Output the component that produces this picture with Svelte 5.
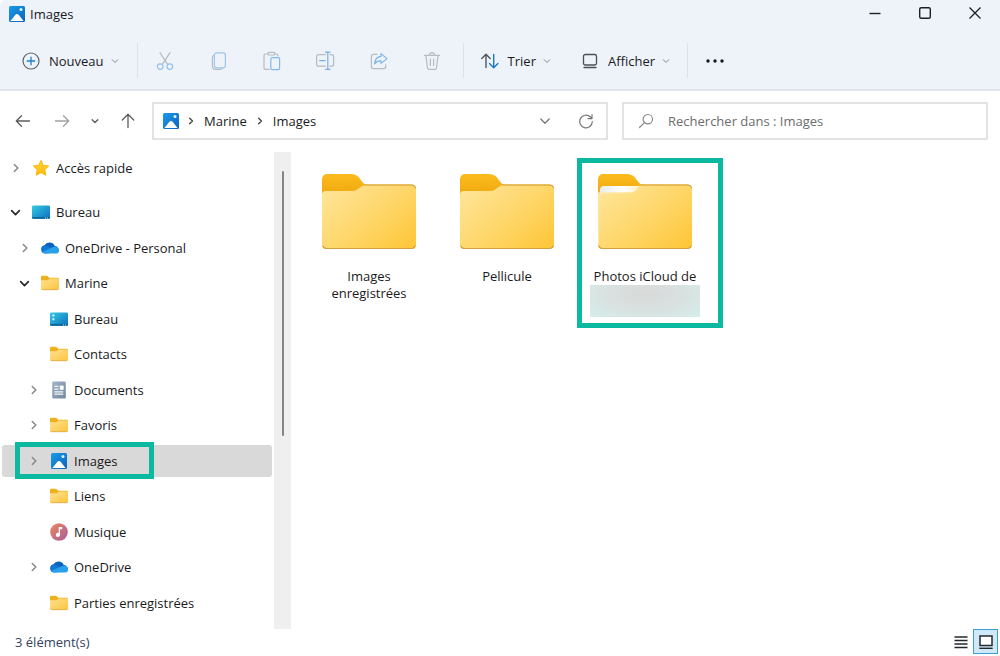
<script>
  const tree = [
    { label: 'Bureau', icon: 'desktop', level: 0, state: 'open' },
    { label: 'OneDrive - Personal', icon: 'cloud', level: 1, state: 'closed' },
    { label: 'Marine', icon: 'folder', level: 1, state: 'open' },
    { label: 'Bureau', icon: 'desktopItems', level: 2 },
    { label: 'Contacts', icon: 'folder', level: 2 },
    { label: 'Documents', icon: 'document', level: 2, state: 'closed' },
    { label: 'Favoris', icon: 'folder', level: 2, state: 'closed' },
    { label: 'Images', icon: 'image', level: 2, state: 'closed', selected: true },
    { label: 'Liens', icon: 'folder', level: 2 },
    { label: 'Musique', icon: 'music', level: 2 },
    { label: 'OneDrive', icon: 'cloud', level: 2, state: 'closed' },
    { label: 'Parties enregistrées', icon: 'folder', level: 2 }
  ];
  const folders = [
    { label: 'Images enregistrées' },
    { label: 'Pellicule' },
    { label: 'Photos iCloud de', marked: true }
  ];
  const tools = [
    { name: 'cut', label: 'Couper' },
    { name: 'copy', label: 'Copier' },
    { name: 'paste', label: 'Coller' },
    { name: 'rename', label: 'Renommer' },
    { name: 'share', label: 'Partager' },
    { name: 'trash', label: 'Supprimer' }
  ];
</script>

{#snippet chevron(dir, size, color, weight)}
  <svg width={size} height={size} viewBox="0 0 12 12" fill="none" stroke={color} stroke-width={weight} stroke-linecap="round" stroke-linejoin="round" aria-hidden="true">
    {#if dir === 'down'}<path d="M1.8 4 6 8.2 10.2 4" />{:else}<path d="M4 1.8 8.2 6 4 10.2" />{/if}
  </svg>
{/snippet}

{#snippet glyph(name)}
  <svg width="18" height="18" viewBox="0 0 18 18" aria-hidden="true">
    {#if name === 'image'}
      <rect x="1" y="1" width="16" height="16" rx="1.5" fill="url(#blue)" />
      <path d="M2.4 16 7.6 9.6q1.4-1.4 2.8 0L15.6 16z" fill="#fff" />
      <circle cx="13" cy="4.4" r="1.5" fill="#e4f4ff" />
    {:else if name === 'star'}
      <path d="M9 1.4 11.3 6.3 16.7 7 12.8 10.7 13.8 16.3 9 13.6 4.2 16.3 5.2 10.7 1.3 7 6.7 6.3z" fill="url(#gold)" stroke="#f9b90f" stroke-width="1" stroke-linejoin="round" />
    {:else if name === 'desktop' || name === 'desktopItems'}
      <rect x="0" y="2.4" width="18" height="13.4" rx="1.4" fill="url(#sea)" />
      <path d="M0 14h18v.4a1.4 1.4 0 0 1-1.4 1.4H1.4A1.4 1.4 0 0 1 0 14.4z" fill="#0b6595" />
      <path d="M13 14.5h1v1h-1zM15 14.5h1v1h-1z" fill="#c7e8f6" />
      {#if name === 'desktopItems'}
        <path d="M2.400 4.600h2v2h-2zM2.400 8.200h2v2h-2z" fill="#dffaff" />
      {/if}
    {:else if name === 'cloud'}
      <path d="M4.3 14.6A4.2 4.2 0 0 1 3.5 6.3 5.8 5.8 0 0 1 13.8 7.1a4 4 0 0 1 3.4 6.1z" fill="#0a62ba" />
      <path d="M.4 9.5A4.2 4.2 0 0 1 6.8 7.2L12.5 10 5 14H2z" fill="#0f78d4" />
      <path d="M1.2 13 8.7 9.5 12 8A4 4 0 0 1 18 11.2a3.4 3.4 0 0 1-3.3 3.4H4.3A4.2 4.2 0 0 1 1.2 13z" fill="#28a0ea" />
    {:else if name === 'folder'}
      <path d="M0 3.2A1.4 1.4 0 0 1 1.4 1.8h4.8l2 2H16.6A1.4 1.4 0 0 1 18 5.2V10H0z" fill="#eeb01c" />
      <path d="M0 6.2h6.8l1.8-1.8h8A1.4 1.4 0 0 1 18 5.8v8.6a1.4 1.4 0 0 1-1.4 1.4H1.4A1.4 1.4 0 0 1 0 14.4z" fill="url(#front)" />
      <path d="M.5 15.2q.4.5 1 .5h15q.6 0 1-.5" fill="none" stroke="#d9a338" stroke-width=".8" />
    {:else if name === 'document'}
      <rect x="2.2" y=".4" width="13.6" height="17.2" rx="1.4" fill="url(#slate)" />
      <path d="M4.5 5.4h4M4.5 8.2h4M4.5 10.8h8.8M4.5 13.2h8.8" stroke="#f4f8fc" stroke-width="1.2" />
      <rect x="9.8" y="4.6" width="3.8" height="4.2" fill="#fff" />
    {:else if name === 'music'}
      <circle cx="9" cy="9" r="8.8" fill="url(#coral)" />
      <circle cx="7.9" cy="11.9" r="2.1" fill="#fff" />
      <path d="M8.7 12V4h3.5v2.2H10V12z" fill="#fff" />
    {/if}
  </svg>
{/snippet}

{#snippet tool(name)}
  <svg width="20" height="20" viewBox="0 0 20 20" fill="none" stroke="#b7bbc0" stroke-width="1.2" stroke-linecap="round" stroke-linejoin="round" aria-hidden="true">
    {#if name === 'cut'}
      <path d="M5 1.6 12.6 13.4M15 1.6 7.4 13.4" />
      <g stroke="#94c0ea"><circle cx="5.2" cy="15.6" r="2.8" /><circle cx="14.8" cy="15.6" r="2.8" /></g>
    {:else if name === 'copy'}
      <path d="M5 4.4Q3.4 5 3.4 7v8q0 3.4 3.4 3.4H11q2 0 2.8-1.4" />
      <rect x="5.4" y="1.8" width="11" height="15" rx="2.2" stroke="#9cc6ee" />
    {:else if name === 'paste'}
      <path d="M6 3H3.8Q2 3 2 4.8v11.6Q2 18.4 4 18.4h3M13 3h1.2Q16 3 16 5" />
      <rect x="6" y="1.4" width="7" height="2.6" rx="1.3" />
      <rect x="8.8" y="6.6" width="8.8" height="12" rx="1.4" stroke="#82b9ee" />
    {:else if name === 'rename'}
      <path d="M10.4 3.6H3.6Q1.6 3.6 1.6 5.6v7.6q0 2 2 2h6.8M15 3.6h1.6q2 0 2 2v7.6q0 2-2 2H15" />
      <path d="M12.8 1.4v16.8M10.6 1.2h4.4M10.6 18.4h4.4M4.6 9.6h5.6" stroke="#78aee4" />
    {:else if name === 'share'}
      <path d="M8 3.4H4.4q-2 0-2 2v10.2q0 2 2 2h10.4q2 0 2-2v-2" />
      <path d="M12 2.6 18 7.6 12 12.4V9.8Q7.8 9.6 5.6 13 6 6 12 5.4z" stroke="#7db5e8" />
    {:else}
      <path d="M2.4 4.4h15.2M7.6 4.2q0-2.6 2.4-2.6t2.4 2.6M4 4.6l1.4 12q.2 1.8 2 1.8h5.2q1.8 0 2-1.8l1.4-12M8.4 8v6.4M11.6 8v6.4" />
    {/if}
  </svg>
{/snippet}

{#snippet bigFolder(marked)}
  <svg class="big" width="94" height="76" viewBox="0 0 94 76" aria-hidden="true">
    <path d="M0 5a5 5 0 0 1 5-5h24q5 0 8 3.5l3.5 4.8Q42 10.500 45 10.500h44a5 5 0 0 1 5 5V40H0z" fill="url(#tab)" />
    <path d="M0 20.500Q0 17 4 17h26q4 0 6.500-2.500l2-1.500q2-1.700 5-1.700H89.500a4.500 4.500 0 0 1 4.500 4.500V70.500a4.500 4.500 0 0 1-4.500 4.500h-85A4.500 4.500 0 0 1 0 70.500z" fill="url(#bigFront)" />
    {#if marked}
      <path d="M2 16q0-4 4-4h35l-2 4q-2 2-6 2.300L6 19q-4 0-4 5z" fill="url(#paper)" />
      <path d="M.6 70V22q0-3 3-3H33q4 0 7-5" fill="none" stroke="#ffe79f" stroke-width="1" />
    {/if}
    <path d="M.6 71.500Q1.500 74.500 4.500 74.500h85q3 0 4-3M43 11h46.500q3.500 0 4 3" fill="none" stroke="#d3a142" stroke-width="1.100" />
  </svg>
{/snippet}

<svg class="defs" width="0" height="0" aria-hidden="true">
  <defs>
    <linearGradient id="blue" x1="0" y1="0" x2="1" y2="1"><stop offset="0" stop-color="#1a9be8" /><stop offset="1" stop-color="#0b63bd" /></linearGradient>
    <linearGradient id="gold" x1="0" y1="0" x2="0" y2="1"><stop offset="0" stop-color="#ffd43c" /><stop offset="1" stop-color="#fdb90a" /></linearGradient>
    <linearGradient id="sea" x1="0" y1="0" x2="1" y2="1"><stop offset="0" stop-color="#35cbe3" /><stop offset="1" stop-color="#0b6fc0" /></linearGradient>
    <linearGradient id="front" x1="0" y1="0" x2="1" y2="1"><stop offset="0" stop-color="#ffe294" /><stop offset="1" stop-color="#fdc43c" /></linearGradient>
    <linearGradient id="bigFront" x1="0" y1="0.1" x2="1" y2="0.9"><stop offset="0" stop-color="#ffe598" /><stop offset="0.5" stop-color="#fed76c" /><stop offset="1" stop-color="#fec73a" /></linearGradient>
    <linearGradient id="tab" x1="0" y1="0" x2="0" y2="0.5"><stop offset="0" stop-color="#fcbb1c" /><stop offset="1" stop-color="#efa90f" /></linearGradient>
    <linearGradient id="paper" x1="0" y1="0" x2="1" y2="0"><stop offset="0" stop-color="#e9edf0" /><stop offset="0.6" stop-color="#fff" /><stop offset="1" stop-color="#fff1c4" /></linearGradient>
    <linearGradient id="slate" x1="0" y1="0" x2="1" y2="1"><stop offset="0" stop-color="#a3b5c8" /><stop offset="1" stop-color="#71869f" /></linearGradient>
    <linearGradient id="coral" x1="0" y1="0" x2="1" y2="1"><stop offset="0" stop-color="#f0895b" /><stop offset="1" stop-color="#a85a9c" /></linearGradient>
  </defs>
</svg>

<div class="window">
  <header>
    <div class="titlebar">
      <div class="title">{@render glyph('image')}<span>Images</span></div>
      <div class="controls">
        <button aria-label="Réduire"><svg width="14" height="14" viewBox="0 0 14 14"><path d="M1.500 7.500h11" stroke="#1c1f24" stroke-width="1.400" /></svg></button>
        <button aria-label="Agrandir"><svg width="14" height="14" viewBox="0 0 14 14"><rect x="1.700" y="1.700" width="10.600" height="10.600" rx="1.500" fill="none" stroke="#1c1f24" stroke-width="1.400" /></svg></button>
        <button aria-label="Fermer"><svg width="14" height="14" viewBox="0 0 14 14"><path d="M1.500 1.500l11 11M12.500 1.500l-11 11" stroke="#1c1f24" stroke-width="1.300" /></svg></button>
      </div>
    </div>
    <div class="toolbar">
      <button class="command new">
        <svg width="18" height="18" viewBox="0 0 18 18" fill="none"><circle cx="9" cy="9" r="8" stroke="#5d646c" stroke-width="1.200" /><path d="M9 5.200v7.600M5.200 9h7.600" stroke="#1b80d0" stroke-width="1.300" stroke-linecap="round" /></svg>
        <span>Nouveau</span>{@render chevron('down', 8, '#80858c', 1.5)}
      </button>
      <div class="tools">
        {#each tools as t}<button aria-label={t.label} disabled>{@render tool(t.name)}</button>{/each}
      </div>
      <div class="views">
        <button class="command">
          <svg width="18" height="18" viewBox="0 0 18 18" fill="none" stroke-width="1.400" stroke-linecap="round" stroke-linejoin="round"><path d="M5 15.500V2.500M.8 6.500 5 2.300l4.200 4.200" stroke="#50565d" /><path d="M12.700 2.500v13M8.500 11.500l4.200 4.200 4.200-4.200" stroke="#1878cc" /></svg>
          <span>Trier</span>{@render chevron('down', 8, '#80858c', 1.5)}
        </button>
        <button class="command">
          <svg width="18" height="18" viewBox="0 0 18 18" fill="none" stroke="#4b5057" stroke-width="1.300" stroke-linecap="round"><rect x="2.500" y="2.500" width="13" height="10.500" rx="1.800" /><path d="M3 15.500h12" /></svg>
          <span>Afficher</span>{@render chevron('down', 8, '#80858c', 1.5)}
        </button>
      </div>
      <button class="more" aria-label="Plus"><svg width="20" height="6" viewBox="0 0 20 6" fill="#16181b"><circle cx="3" cy="3" r="1.700" /><circle cx="10" cy="3" r="1.700" /><circle cx="17" cy="3" r="1.700" /></svg></button>
    </div>
  </header>

  <nav class="address">
    <div class="history">
      <button aria-label="Précédent"><svg width="16" height="16" viewBox="0 0 16 16" fill="none" stroke="#5c5c5c" stroke-width="1.300" stroke-linecap="round" stroke-linejoin="round"><path d="M14.500 8h-13M6.500 2.800 1.300 8l5.200 5.200" /></svg></button>
      <button aria-label="Suivant"><svg width="16" height="16" viewBox="0 0 16 16" fill="none" stroke="#a2a2a2" stroke-width="1.300" stroke-linecap="round" stroke-linejoin="round"><path d="M1.500 8h13M9.500 2.800 14.700 8l-5.200 5.200" /></svg></button>
      <button aria-label="Emplacements récents">{@render chevron('down', 8, '#5c5c5c', 2)}</button>
      <button aria-label="Dossier parent"><svg width="16" height="16" viewBox="0 0 16 16" fill="none" stroke="#5c5c5c" stroke-width="1.300" stroke-linecap="round" stroke-linejoin="round"><path d="M8 14.500v-13M2.300 7 8 1.300 13.700 7" /></svg></button>
    </div>
    <div class="path">
      {@render glyph('image')}
      {@render chevron('right', 8, '#4c4c4c', 2.2)}
      <a href="#marine">Marine</a>
      {@render chevron('right', 8, '#4c4c4c', 2.2)}
      <a href="#images">Images</a>
      <span class="grow"></span>
      <button aria-label="Historique">{@render chevron('down', 12, '#777', 1.3)}</button>
      <button aria-label="Actualiser"><svg width="16" height="16" viewBox="0 0 16 16" fill="none" stroke="#777" stroke-width="1.200" stroke-linecap="round" stroke-linejoin="round"><path d="M14.300 8.500A6.300 6.300 0 1 1 12.400 4L14 5.500M14 1.600v4h-4" /></svg></button>
    </div>
    <label class="search">
      <svg width="16" height="16" viewBox="0 0 16 16" fill="none" stroke="#8a8a8a" stroke-width="1.200" stroke-linecap="round"><circle cx="9.800" cy="6.200" r="4.700" /><path d="M6.400 9.600 1.500 14.500" /></svg>
      <input type="search" aria-label="Rechercher" placeholder="Rechercher dans : Images" />
    </label>
  </nav>

  <main>
    <aside>
      <div class="tree">
        <button class="row">
          <span class="arrow">{@render chevron('right', 10, '#8a8a8a', 1.9)}</span>
          {@render glyph('star')}<span>Accès rapide</span>
        </button>
        <div class="branch">
          {#each tree as item}
            <button class={['row', `level${item.level}`, item.selected && 'selected']}>
              <span class="arrow">
                {#if item.state === 'open'}{@render chevron('down', 11, '#2b2b2b', 1.9)}
                {:else if item.state === 'closed'}{@render chevron('right', 10, '#8a8a8a', 1.9)}{/if}
              </span>
              {@render glyph(item.icon)}<span>{item.label}</span>
              {#if item.selected}<span class="frame"></span>{/if}
            </button>
          {/each}
        </div>
      </div>
      <div class="scroll"><div class="before"></div><div class="thumb"></div><div class="after"></div></div>
    </aside>
    <section class="files">
      {#each folders as f}
        <button class="tile">
          {@render bigFolder(f.marked)}
          <span class="name">{f.label}</span>
          {#if f.marked}<span class="veil"></span><span class="frame"></span>{/if}
        </button>
      {/each}
    </section>
  </main>

  <footer>
    <span>3 élément(s)</span>
    <div class="modes">
      <button aria-label="Détails"><svg width="16" height="16" viewBox="0 0 16 16"><path d="M1.500 3h13M1.500 6.500h13M1.500 10h13M1.500 13.500h13" stroke="#26292c" stroke-width="1.400" /></svg></button>
      <button class="on" aria-label="Grandes icônes"><svg width="16" height="16" viewBox="0 0 16 16"><rect x="2" y="2" width="12" height="9.500" fill="#fff" stroke="#26292c" stroke-width="1.500" /><path d="M1.300 14.300h13.400" stroke="#26292c" stroke-width="1.400" /></svg></button>
    </div>
  </footer>
</div>

<style>
  :global(body) { margin: 0; background: #fff; }
  .defs { position: absolute; }
  .window, .window button, .window input { font-family: "Open Sans", "Noto Sans", sans-serif; font-size: 13px; color: #1a1a1c; }
  .window { display: flex; flex-direction: column; min-height: calc(100vh - 2px); background: #fff; }
  .window :global(svg) { flex: none; display: block; }
  button { border: 0; padding: 0; margin: 0; background: none; display: flex; align-items: center; justify-content: center; line-height: 18px; }
  a { color: inherit; text-decoration: none; }
  header { background: #eef3fa; border-bottom: 2px solid #e2e6ec; border-top-left-radius: 6px; }
  .titlebar { display: flex; justify-content: space-between; height: 28px; }
  .title { display: flex; align-items: center; gap: 4px; padding-left: 8px; line-height: 18px; }
  .controls { display: flex; }
  .controls button { width: 50px; height: 26px; }
  .toolbar { display: flex; align-items: center; height: 57px; padding-top: 4px; }
  .command { gap: 9px; }
  .command.new { padding: 0 18px 0 22px; }
  .command :global(svg:last-child) { margin-left: -2px; }
  .tools { display: grid; grid-template-columns: repeat(6, 1fr); width: 320px; padding: 0 4px 0 1px; height: 35px; border-left: 1px solid #dde2e8; border-right: 1px solid #dde2e8; }
  .views { display: flex; gap: 30px; height: 35px; padding: 0 17px; border-right: 1px solid #dde2e8; }
  .more { padding: 0 17px; }
  .address { display: grid; grid-template-columns: 138px 456fr 380fr; align-items: center; padding: 11px 12px 12px 14px; height: 38px; }
  .history { display: flex; gap: 15px; }
  .history button { width: 18px; height: 18px; }
  .history button:nth-child(2) { margin-left: 6px; }
  .path { display: flex; align-items: center; box-sizing: border-box; height: 38px; border: 2px solid #e3e3e3; padding: 0 12px 0 8px; gap: 8px; }
  .path a { margin: 0 1px; }
  .path > :global(svg:first-child) { margin-right: -1px; }
  .grow { flex: 1; }
  .path button { width: 16px; height: 18px; }
  .path button:last-child { margin-left: 17px; }
  .search { display: flex; align-items: center; box-sizing: border-box; height: 38px; border: 2px solid #e3e3e3; margin-left: 14px; padding: 0 14px; gap: 14px; }
  .search input { flex: 1; min-width: 0; border: 0; outline: 0; padding: 0; background: none; }
  .search input::placeholder { color: #6d6d6d; opacity: 1; }
  main { flex: 1; display: flex; }
  aside { display: flex; width: 291px; flex: none; }
  .tree { flex: 1; display: flex; flex-direction: column; gap: 12px; padding: 0 2px 10px; }
  .branch { flex: 1; display: flex; flex-direction: column; justify-content: space-between; }
  .row { position: relative; width: 100%; height: 32px; justify-content: flex-start; padding-left: 7px; text-align: left; white-space: nowrap; gap: 6px; border-radius: 3px; }
  .level1 { padding-left: 16px; }
  .level2 { padding-left: 25px; }
  .arrow { width: 13px; display: flex; justify-content: center; margin-right: 4px; }
  .selected { background: #d9d9d9; }
  .frame { position: absolute; border: 5px solid #0bb8a0; box-sizing: border-box; }
  .row .frame { left: 13px; top: -3px; width: 139px; height: 37px; }
  .scroll { width: 17px; background: #efefef; display: flex; flex-direction: column; align-items: center; }
  .before { flex: 19; }
  .thumb { flex: 266; width: 2px; background: #858585; border-radius: 1px; }
  .after { flex: 193; }
  .files { flex: 1; display: grid; grid-template-columns: repeat(auto-fill, 138px); align-content: start; padding: 7px 9px; }
  .tile { position: relative; flex-direction: column; justify-content: flex-start; padding: 15px 14px 8px; min-height: 170px; }
  .name { margin-top: 18px; line-height: 17px; text-align: center; }
  .veil { width: 110px; height: 32px; background: radial-gradient(ellipse at 50% 30%, #d9d9d9 0%, #d9e0df 45%, #d5eeea 100%); }
  .tile .frame { top: -1px; left: 1px; right: -9px; height: 170px; }
  footer { display: flex; align-items: center; justify-content: space-between; height: 25px; padding: 0 2px 0 15px; color: #33435f; }
  .modes { display: flex; }
  .modes button { width: 25px; height: 25px; box-sizing: border-box; }
  .modes .on { background: #cfe9f8; border: 1px solid #3e9fd4; }
</style>
